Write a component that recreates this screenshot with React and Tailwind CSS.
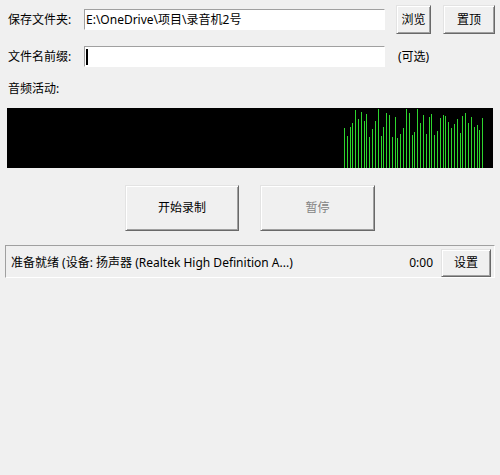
import React from "react";

const BARS = [
  [344,128],[347,136],[350,127],[352,123],[355,110],[358,119],[361,112],[364,121],[366,114],[369,137],
  [372,129],[375,121],[378,109],[381,136],[383,127],[386,113],[389,115],[392,137],[395,117],[397,138],
  [400,134],[403,128],[406,109],[409,113],[412,135],[414,132],[417,109],[420,123],[423,115],[426,134],
  [429,117],[431,114],[434,135],[437,131],[440,118],[443,115],[445,116],[448,122],[451,128],[454,124],
  [457,119],[460,133],[462,116],[465,113],[468,123],[471,117],[474,127],[477,125],[479,130],[482,118],
];

function WinButton({ children, className = "", disabled = false }) {
  return (
    <div
      className={
        "shrink-0 flex items-center justify-center bg-[#f0f0f0] border border-t-[#e3e3e3] border-l-[#e3e3e3] border-r-[#696969] border-b-[#696969] shadow-[inset_1px_1px_0_#ffffff,inset_-1px_-1px_0_#a0a0a0] text-[12px] leading-none " +
        (disabled ? "text-[#838383] " : "text-black ") +
        className
      }
    >
      {children}
    </div>
  );
}

function Field({ children, className = "" }) {
  return (
    <div
      className={
        "shrink-0 flex items-center bg-white border border-t-[#a0a0a0] border-l-[#a0a0a0] border-r-white border-b-white h-[21px] pl-[1px] " +
        className
      }
    >
      {children}
    </div>
  );
}

export default function App() {
  return (
    <div
      className="w-[500px] h-[475px] bg-[#f0f0f0] text-black text-[12px] flex flex-col overflow-hidden"
      style={{ fontFamily: '"Noto Sans", "Noto Sans CJK SC", sans-serif' }}
    >
      {/* Row 1 */}
      <div className="flex items-center h-[29px] mt-[5px]">
        <div className="shrink-0 w-[84px] pl-[8px] leading-none">保存文件夹:</div>
        <Field className="w-[301px]">
          <span className="leading-none whitespace-nowrap">E:\OneDrive\项目\录音机2号</span>
        </Field>
        <WinButton className="ml-[11px] w-[35px] h-[29px]">浏览</WinButton>
        <WinButton className="ml-[12px] w-[52px] h-[29px]">置顶</WinButton>
      </div>

      {/* Row 2 */}
      <div className="flex items-center h-[21px] mt-[12px]">
        <div className="shrink-0 w-[84px] pl-[8px] leading-none">文件名前缀:</div>
        <Field className="w-[301px]">
          <span className="w-[2px] h-[16px] bg-black"></span>
        </Field>
        <div className="ml-[13px] leading-none">(可选)</div>
      </div>

      {/* Row 3 */}
      <div className="h-[16px] mt-[14px] pl-[8px] flex items-center leading-none">音频活动:</div>

      {/* Activity panel */}
      <div className="ml-[7px] mt-[11px] w-[486px] h-[60px] bg-black">
        <svg width="486" height="60" viewBox="0 0 486 60" className="block">
          {BARS.map(([x, y], i) => (
            <rect key={i} x={x - 7} y={y - 108} width="1" height={168 - y} fill="#2ed52e" />
          ))}
        </svg>
      </div>

      {/* Main buttons */}
      <div className="flex justify-center gap-[21px] mt-[17px]">
        <WinButton className="w-[114px] h-[46px]">开始录制</WinButton>
        <WinButton className="w-[115px] h-[46px]" disabled>暂停</WinButton>
      </div>

      {/* Status bar */}
      <div className="ml-[5px] mt-[14px] w-[490px] h-[33px] border border-t-[#a0a0a0] border-l-[#a0a0a0] border-r-white border-b-white flex items-start pt-[3px] pr-[3px]">
        <div className="flex-1 pl-[5px] h-[28px] flex items-center leading-none whitespace-nowrap">
          准备就绪 (设备: 扬声器 (Realtek High Definition A...)
        </div>
        <div className="h-[28px] flex items-center leading-none mr-[8px]">0:00</div>
        <WinButton className="w-[50px] h-[28px]">设置</WinButton>
      </div>
    </div>
  );
}
